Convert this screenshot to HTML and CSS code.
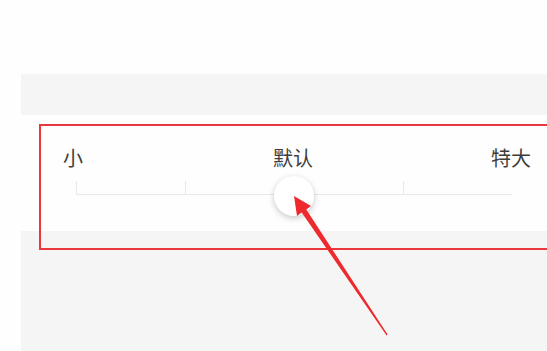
FILE: index.html
```html
<!DOCTYPE html>
<html lang="zh-CN">
<head>
    <meta charset="UTF-8">
    <meta name="viewport" content="width=device-width, initial-scale=1.0">
    <title>字体大小</title>
    <link rel="stylesheet" href="styles.css">
</head>
<body>
    <div class="panel">
        <div class="card">
            <div class="labels">
                <span>小</span>
                <span class="mid">默认</span>
                <span>特大</span>
            </div>
            <div class="track">
                <div class="seg"></div>
                <div class="seg"></div>
                <div class="seg"></div>
                <div class="seg"></div>
                <div class="knob"></div>
            </div>
        </div>
    </div>

    <!-- annotation overlay -->
    <div class="highlight"></div>
    <svg class="arrow" width="547" height="351" viewBox="0 0 547 351">
        <polygon fill="#ee2a2e" points="294,196 311,206 306.3,209.4 387.6,334.6 386.6,335.4 301.7,212.6 297,216"/>
    </svg>
</body>
</html>
```

FILE: styles.css
```css
* {
    margin: 0;
    padding: 0;
    box-sizing: border-box;
}

body {
    font-family: "Noto Sans CJK SC", "Noto Sans", sans-serif;
    background: #fefefe;
    height: 351px;
    overflow: hidden;
    position: relative;
}

.panel {
    margin: 74px 0 0 21px;
    padding-top: 41px;
    height: 277px;
    background: #f5f5f5;
}

.card {
    background: #fefefe;
    height: 116px;
    padding: 31px 0 0 42px;
}

.labels {
    display: flex;
    justify-content: space-between;
    width: 468px;
    font-size: 20px;
    line-height: 24px;
    color: #3d3d3d;
}

.labels .mid {
    margin-left: 12px;
}

.track {
    position: relative;
    display: flex;
    width: 436px;
    height: 14px;
    margin: 11px 0 0 13px;
    border-bottom: 1px solid #e8e8e8;
}

.seg {
    flex: 1;
    border-left: 1px solid #e8e8e8;
}

.seg:last-of-type {
    border-right: 1px solid #e8e8e8;
}

.knob {
    position: absolute;
    left: 198px;
    top: -5px;
    width: 40px;
    height: 40px;
    border-radius: 50%;
    background: #fff;
    box-shadow: 0 2px 6px rgba(0, 0, 0, 0.22);
}

.highlight {
    position: absolute;
    left: 39px;
    top: 124px;
    width: 530px;
    height: 126px;
    border: 2px solid #e8383d;
}

.arrow {
    position: absolute;
    left: 0;
    top: 0;
}
```
